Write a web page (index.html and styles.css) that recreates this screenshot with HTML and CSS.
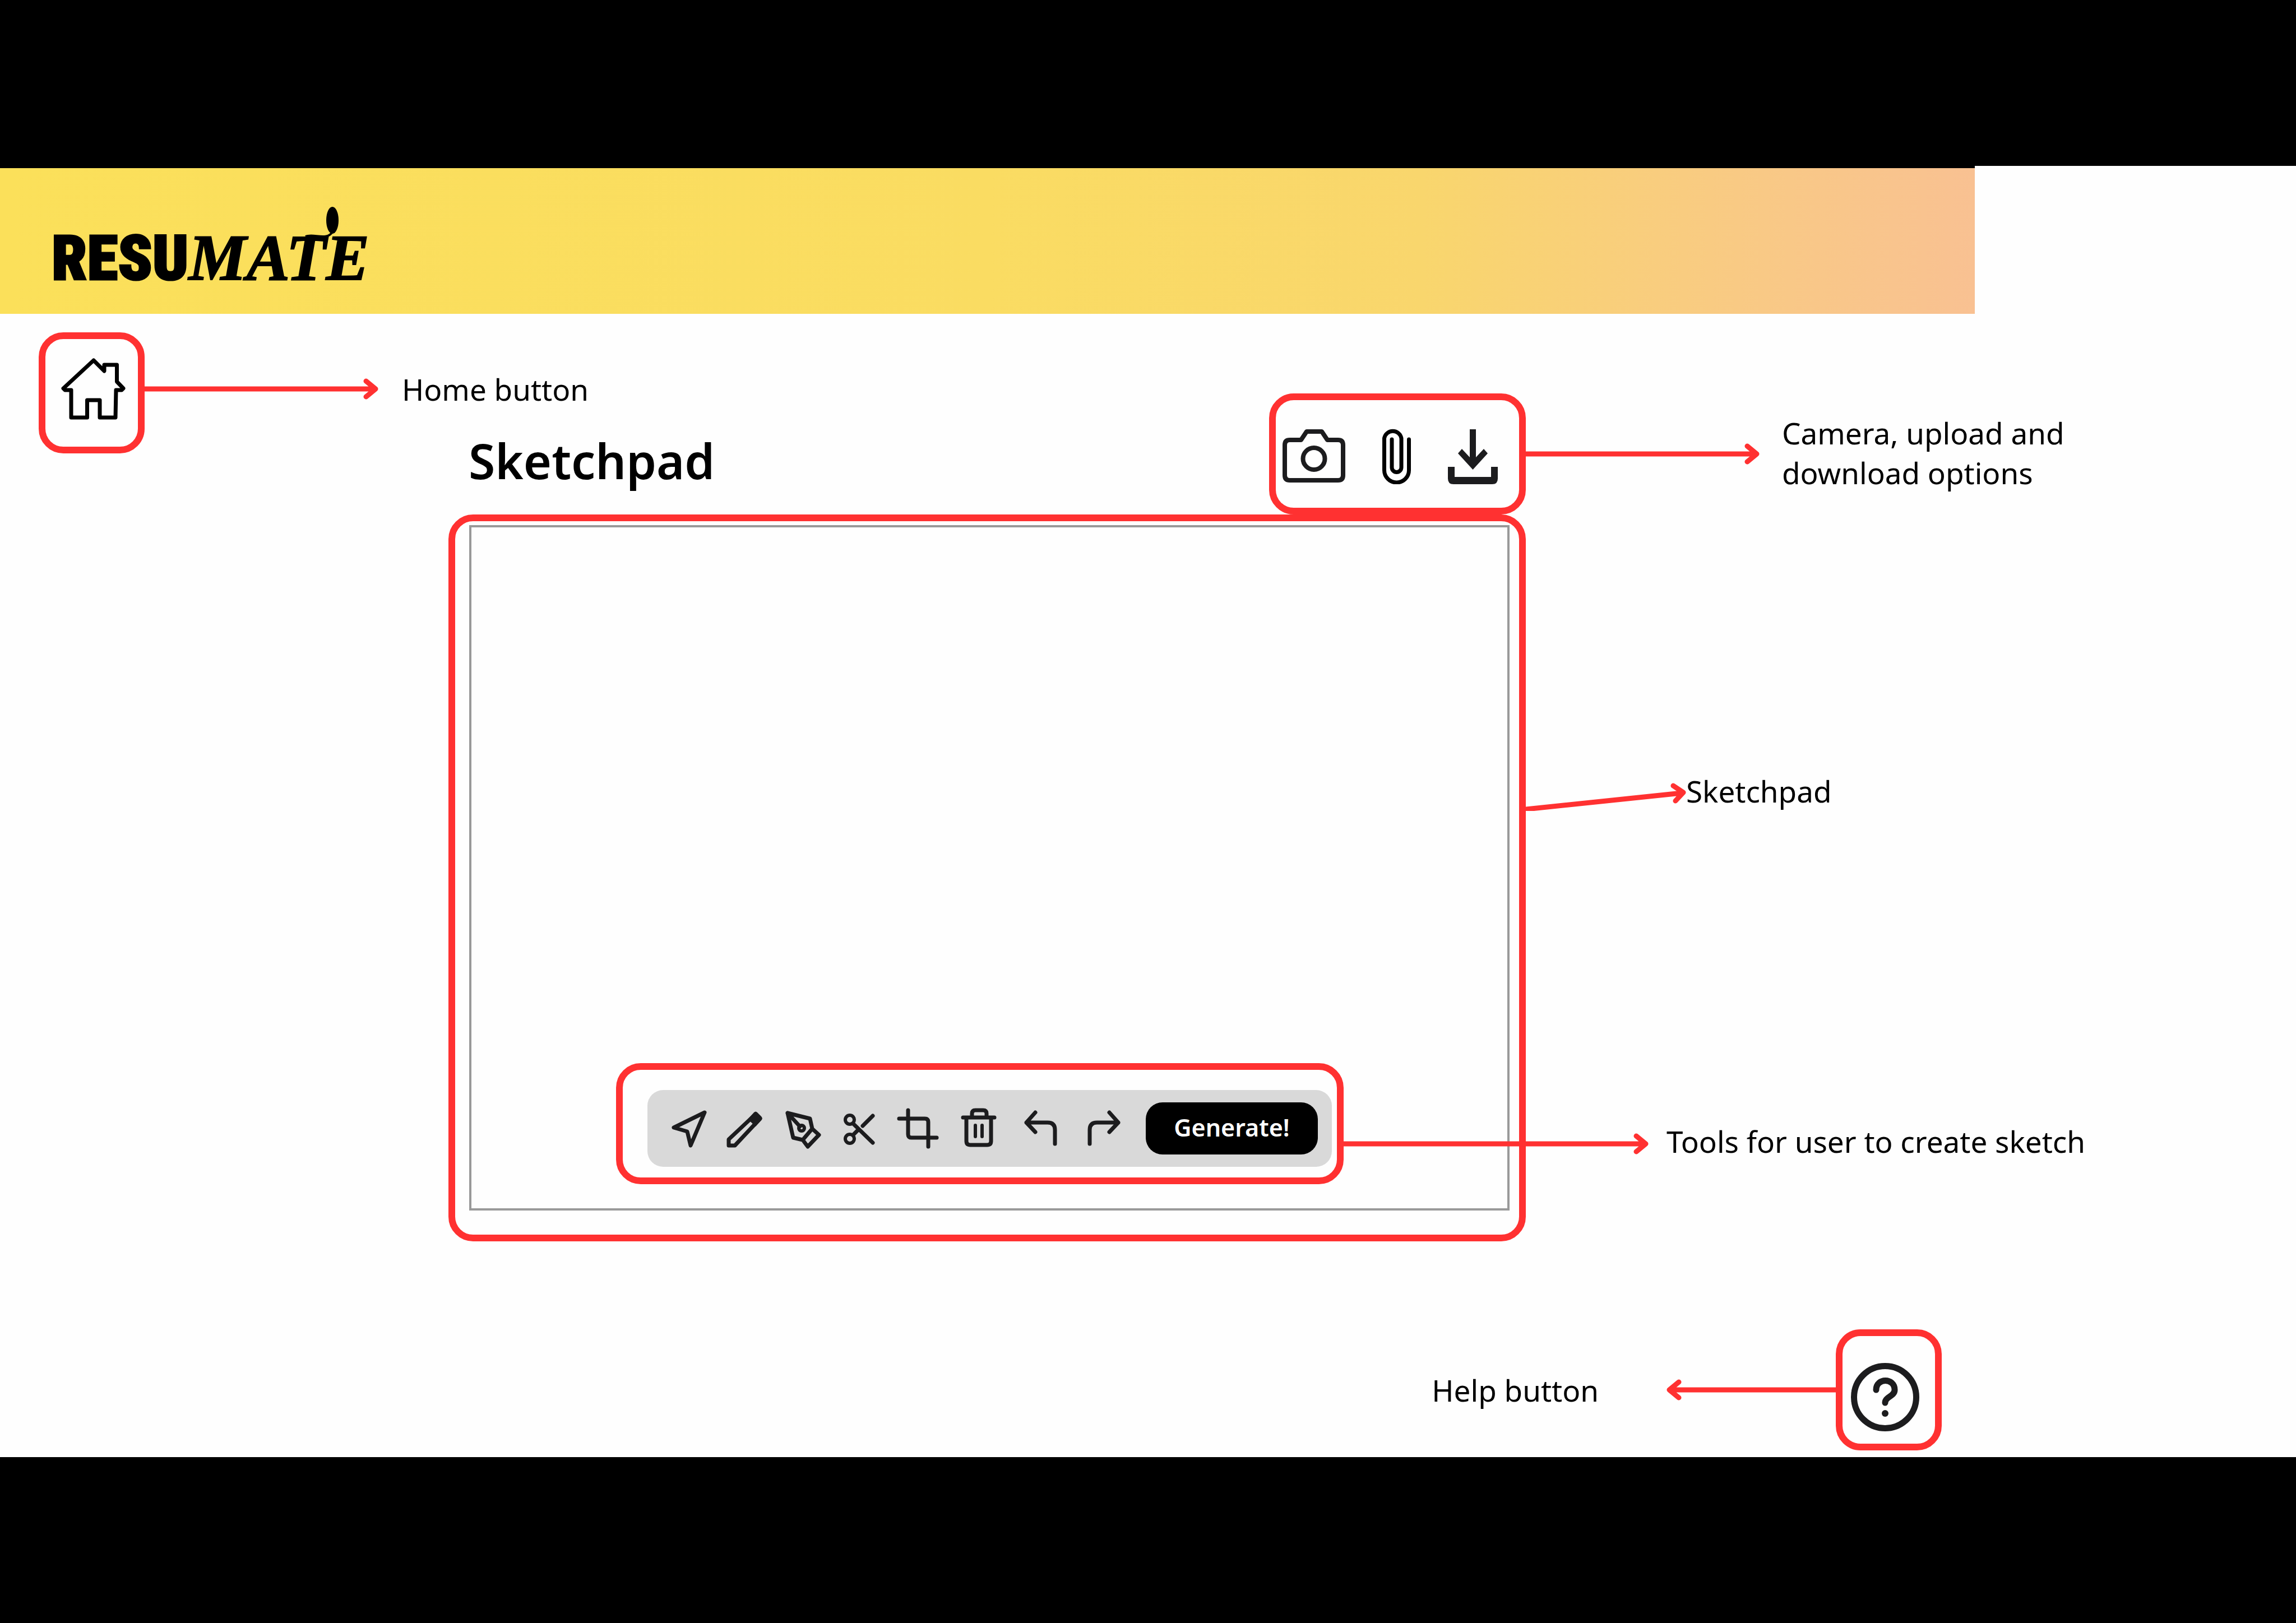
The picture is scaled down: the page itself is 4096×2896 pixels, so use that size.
FILE: index.html
```html
<!DOCTYPE html>
<html lang="en">
<head>
  <meta charset="utf-8">
  <title>Resumate – Sketchpad</title>
  <link rel="stylesheet" href="styles.css">
</head>
<body>
  <div class="board">
    <header class="banner">
      <a class="logo" href="#"><span class="logo-sans">RESU</span><span class="logo-serif">MATE<svg class="logo-swash" viewBox="0 0 64 60" width="64" height="60" aria-hidden="true"><ellipse cx="50" cy="25" rx="11" ry="24"/><path d="M2 54C16 48 40 62 50 46"/></svg></span></a>
    </header>

    <main class="workspace">
      <div class="note home-note">
        <button class="frame icon-button" type="button" aria-label="Home">
          <svg class="frame-icon" viewBox="0 0 165 192" width="165" height="192">
            <path class="home-line" d="M86 38 105 57V46H127.500V76L139 88 136 91H126L125 140H97V109H74.500V140H46V91H35L32 88Z"/>
          </svg>
        </button>
        <div class="home-caption">
          <svg class="arrow" viewBox="0 0 417 44" width="417" height="44"><path d="M0 22H410M395 8 412 22 395 36"/></svg>
          <p class="label">Home button</p>
        </div>
      </div>

      <div class="title-row">
        <h1 class="title">Sketchpad</h1>
        <div class="frame options">
          <button class="icon-button" type="button" aria-label="Camera">
            <svg viewBox="0 0 112 108" width="112" height="108">
              <path class="line" d="M13 29H33L43 14H70L80 29H99Q108 29 108 38V92Q108 101 99 101H13Q4 101 4 92V38Q4 29 13 29Z"/>
              <circle class="line" cx="56" cy="62.500" r="19.500"/>
            </svg>
          </button>
          <button class="icon-button" type="button" aria-label="Upload">
            <svg viewBox="0 0 51 108" width="51" height="108">
              <path class="clip-line" d="M47.500 28V83A22 22 0 0 1 3.500 83V26A15.500 15.500 0 0 1 34 26V78A8.500 8.500 0 0 1 17 78V28"/>
            </svg>
          </button>
          <button class="icon-button" type="button" aria-label="Download">
            <svg viewBox="0 0 89 108" width="89" height="108">
              <path class="solid" d="M39 10H50V60L64 45 71 53 44.500 82 18 53 25 45 39 60ZM0 77H12V95H77V77H89V98Q89 108 79 108H10Q0 108 0 98Z"/>
            </svg>
          </button>
        </div>
      </div>

      <div class="note options-note">
        <svg class="arrow" viewBox="0 0 417 44" width="417" height="44"><path d="M0 22H410M395 8 412 22 395 36"/></svg>
        <p class="label">Camera, upload and<br>download options</p>
      </div>

      <section class="frame pad">
        <div class="canvas">
          <div class="frame toolbox">
            <div class="toolbar">
              <div class="tools">
                <button class="icon-button" type="button" aria-label="Select">
                  <svg viewBox="0 0 63 80" width="63" height="80"><path class="tool-line" d="M59 11 4 38 28 45 34 70Z"/></svg>
                </button>
                <button class="icon-button" type="button" aria-label="Pencil">
                  <svg viewBox="0 0 64 80" width="64" height="80">
                    <path class="tool-line" d="M4 59V70H15L60 22 52 14Z"/>
                    <path class="solid" d="M38 23 49 11Q52 8 55 11L62 18Q65 21 62 25L52 36Z"/>
                  </svg>
                </button>
                <button class="icon-button" type="button" aria-label="Pen">
                  <svg viewBox="0 0 72 80" width="72" height="80">
                    <path class="tool-line" d="M10 12 50 22 54 40 37 60 20 56ZM10 12 32 36M55 41 66 51 46 72 37 60"/>
                    <circle class="tool-line thin" cx="35" cy="39" r="5"/>
                  </svg>
                </button>
                <button class="icon-button" type="button" aria-label="Cut">
                  <svg viewBox="0 0 63 80" width="63" height="80">
                    <circle class="tool-line thin" cx="14" cy="24" r="8"/>
                    <circle class="tool-line thin" cx="14" cy="58" r="8"/>
                    <path class="tool-line" d="M20 31 55 65M55 17 37 35M20 51 30 41"/>
                  </svg>
                </button>
                <button class="icon-button" type="button" aria-label="Crop">
                  <svg viewBox="0 0 75 80" width="75" height="80"><path class="tool-line" d="M20 7V50Q20 56 26 56H71M4 22H50Q56 22 56 28V72"/></svg>
                </button>
                <button class="icon-button" type="button" aria-label="Delete">
                  <svg viewBox="0 0 70 80" width="70" height="80">
                    <path class="tool-line" d="M8 20H64M24 19V13Q24 7 30 7H44Q50 7 50 13V19M14 21V62Q14 69 21 69H51Q58 69 58 62V21"/>
                    <path class="tool-line thin" d="M30 34V54M42 34V54"/>
                  </svg>
                </button>
              </div>
              <div class="history">
                <button class="icon-button" type="button" aria-label="Undo">
                  <svg viewBox="0 0 59 80" width="59" height="80"><path class="tool-line" d="M20 11 4 29 20 46M4 29H42Q55 29 55 42V67"/></svg>
                </button>
                <button class="icon-button" type="button" aria-label="Redo">
                  <svg viewBox="0 0 59 80" width="59" height="80"><path class="tool-line" d="M39 11 55 29 39 46M55 29H17Q4 29 4 42V67"/></svg>
                </button>
              </div>
              <button class="generate" type="button">Generate!</button>
            </div>
            <svg class="arrow tools-arrow" viewBox="0 0 544 44" width="544" height="44"><path d="M0 22H537M522 8 539 22 522 36"/></svg>
          </div>
        </div>
      </section>

      <div class="side-notes">
        <div class="note">
          <svg class="arrow" viewBox="0 0 286 71" width="286" height="71"><path d="M0 68 278 39M263 26 281 38 267 53"/></svg>
          <p class="label">Sketchpad</p>
        </div>
        <p class="label tools-label">Tools for user to create sketch</p>
      </div>

      <div class="note help-note">
        <p class="label">Help button</p>
        <svg class="arrow" viewBox="0 0 302 44" width="302" height="44"><path d="M302 22H7M22 8 5 22 22 36"/></svg>
        <button class="frame icon-button" type="button" aria-label="Help">
          <svg class="frame-icon" viewBox="0 0 165 192" width="165" height="192">
            <circle class="help-line" cx="76" cy="109" r="55.500"/>
            <path class="help-line" d="M60 96C60 74 93 74 93 96C93 108 76 108 76 119"/>
            <circle class="solid" cx="76" cy="138" r="6"/>
          </svg>
        </button>
      </div>
    </main>
  </div>
</body>
</html>
```
FILE: styles.css
```css
:root {
  --red: #ff3131;
  --ink: #1c1c1e;
}

* {
  box-sizing: border-box;
}

body {
  margin: 0;
  min-height: 100vh;
  display: flex;
  flex-direction: column;
  justify-content: center;
  background: #000;
  color: #000;
  font-family: "Noto Sans", "Open Sans", sans-serif;
}

h1,
p {
  margin: 0;
}

svg {
  display: block;
  flex: none;
}

button {
  font: inherit;
}

.board {
  background: #fefefe;
}

/* Banner */
.banner {
  width: 86%;
  height: 264px;
  display: flex;
  align-items: center;
  padding-left: 92px;
  padding-top: 60px;
  border-top: 4px solid #000;
  background: linear-gradient(90deg, #fbe05a 0%, #fadc62 50%, #f9d66d 72%, #f9ca84 88%, #f9c192 100%);
}

.logo {
  display: flex;
  align-items: baseline;
  color: #000;
  text-decoration: none;
  line-height: 1;
}

.logo-sans {
  font-family: "Roboto Condensed", "Open Sans Condensed", "Liberation Sans Narrow", "Liberation Sans", sans-serif;
  font-weight: 900;
  font-size: 112px;
  -webkit-text-stroke: 3px #000;
}

.logo-serif {
  position: relative;
  font-family: "Liberation Serif", serif;
  font-weight: 700;
  font-style: italic;
  font-size: 116px;
  -webkit-text-stroke: 2px #000;
}

.logo-swash {
  position: absolute;
  right: 52px;
  top: -34px;
}

.logo-swash path {
  fill: none;
  stroke: #000;
  stroke-width: 4;
}

/* Page grid: the home and title rows share the middle track */
.workspace {
  display: grid;
  grid-template-columns: minmax(0, 800fr) minmax(0, 1922fr) minmax(0, 1374fr);
  grid-template-rows: 109px 107px 109px auto auto;
  padding: 33px 0 12px;
}

.frame {
  border: 12px solid var(--red);
  border-radius: 44px;
}

.note {
  display: flex;
  align-items: center;
}

.label {
  font-size: 53px;
  line-height: 71px;
  white-space: nowrap;
}

.arrow path {
  fill: none;
  stroke: var(--red);
  stroke-width: 9;
  stroke-linecap: round;
  stroke-linejoin: round;
}

.icon-button {
  display: block;
  flex: none;
  padding: 0;
  background: none;
  cursor: pointer;
}

.icon-button:not(.frame) {
  border: 0;
}

.home-note {
  grid-area: 1 / 1 / 3 / 3;
  padding-left: 69px;
}

.home-caption {
  display: flex;
  align-items: center;
  gap: 42px;
  padding-bottom: 14px;
}

.title-row {
  grid-area: 2 / 2 / 4 / 3;
  display: flex;
  align-items: center;
  justify-content: space-between;
  padding-left: 36px;
}

.title {
  font-size: 86px;
  line-height: 112px;
  font-weight: 600;
  padding-top: 24px;
}

.options {
  display: flex;
  align-items: center;
  gap: 66px;
  width: 458px;
  height: 216px;
  padding-left: 12px;
}

.options-note {
  grid-area: 2 / 3 / 4 / 4;
  gap: 40px;
}

.options-note .label {
  padding-bottom: 4px;
}

/* Sketch area */
.pad {
  grid-area: 4 / 2 / 5 / 3;
  padding: 7px 17px 43px 25px;
}

.canvas {
  height: 1223px;
  display: flex;
  align-items: flex-end;
  padding: 0 292px 43px 258px;
  border: 4px solid #999;
}

.toolbox {
  position: relative;
  flex: 1;
  padding: 36px 9px 19px 44px;
}

.toolbar {
  display: flex;
  align-items: center;
  height: 137px;
  padding: 0 25px 0 43px;
  border-radius: 28px;
  background: #d9d9d9;
}

.tools {
  display: flex;
  gap: 35px;
}

.history {
  display: flex;
  gap: 54px;
  margin-left: 47px;
}

.generate {
  width: 307px;
  height: 93px;
  margin-left: auto;
  padding: 0 0 4px;
  border: 0;
  border-radius: 30px;
  background: #000;
  color: #fff;
  font-size: 43px;
  line-height: 56px;
  font-weight: 600;
  cursor: pointer;
}

.tools-arrow {
  position: absolute;
  left: calc(100% + 12px);
  top: 110px;
}

.side-notes {
  grid-area: 4 / 3 / 5 / 4;
  padding-top: 458px;
}

.tools-label {
  margin-top: 554px;
  padding-left: 251px;
}

.help-note {
  grid-area: 5 / 1 / 6 / 4;
  justify-content: flex-end;
  margin-top: 157px;
  padding-right: 632px;
}

.help-note .label {
  margin-right: 121px;
}

/* Icon strokes */
.line,
.clip-line,
.home-line,
.help-line,
.tool-line {
  fill: none;
  stroke: var(--ink);
  stroke-width: 8;
  stroke-linecap: round;
  stroke-linejoin: round;
}

.clip-line {
  stroke: #000;
  stroke-width: 7;
}

.home-line {
  stroke: #000;
  stroke-width: 7;
}

.help-line {
  stroke-width: 11;
}

.tool-line {
  stroke-width: 7;
}

.thin {
  stroke-width: 6;
}

.solid {
  fill: var(--ink);
}
```
